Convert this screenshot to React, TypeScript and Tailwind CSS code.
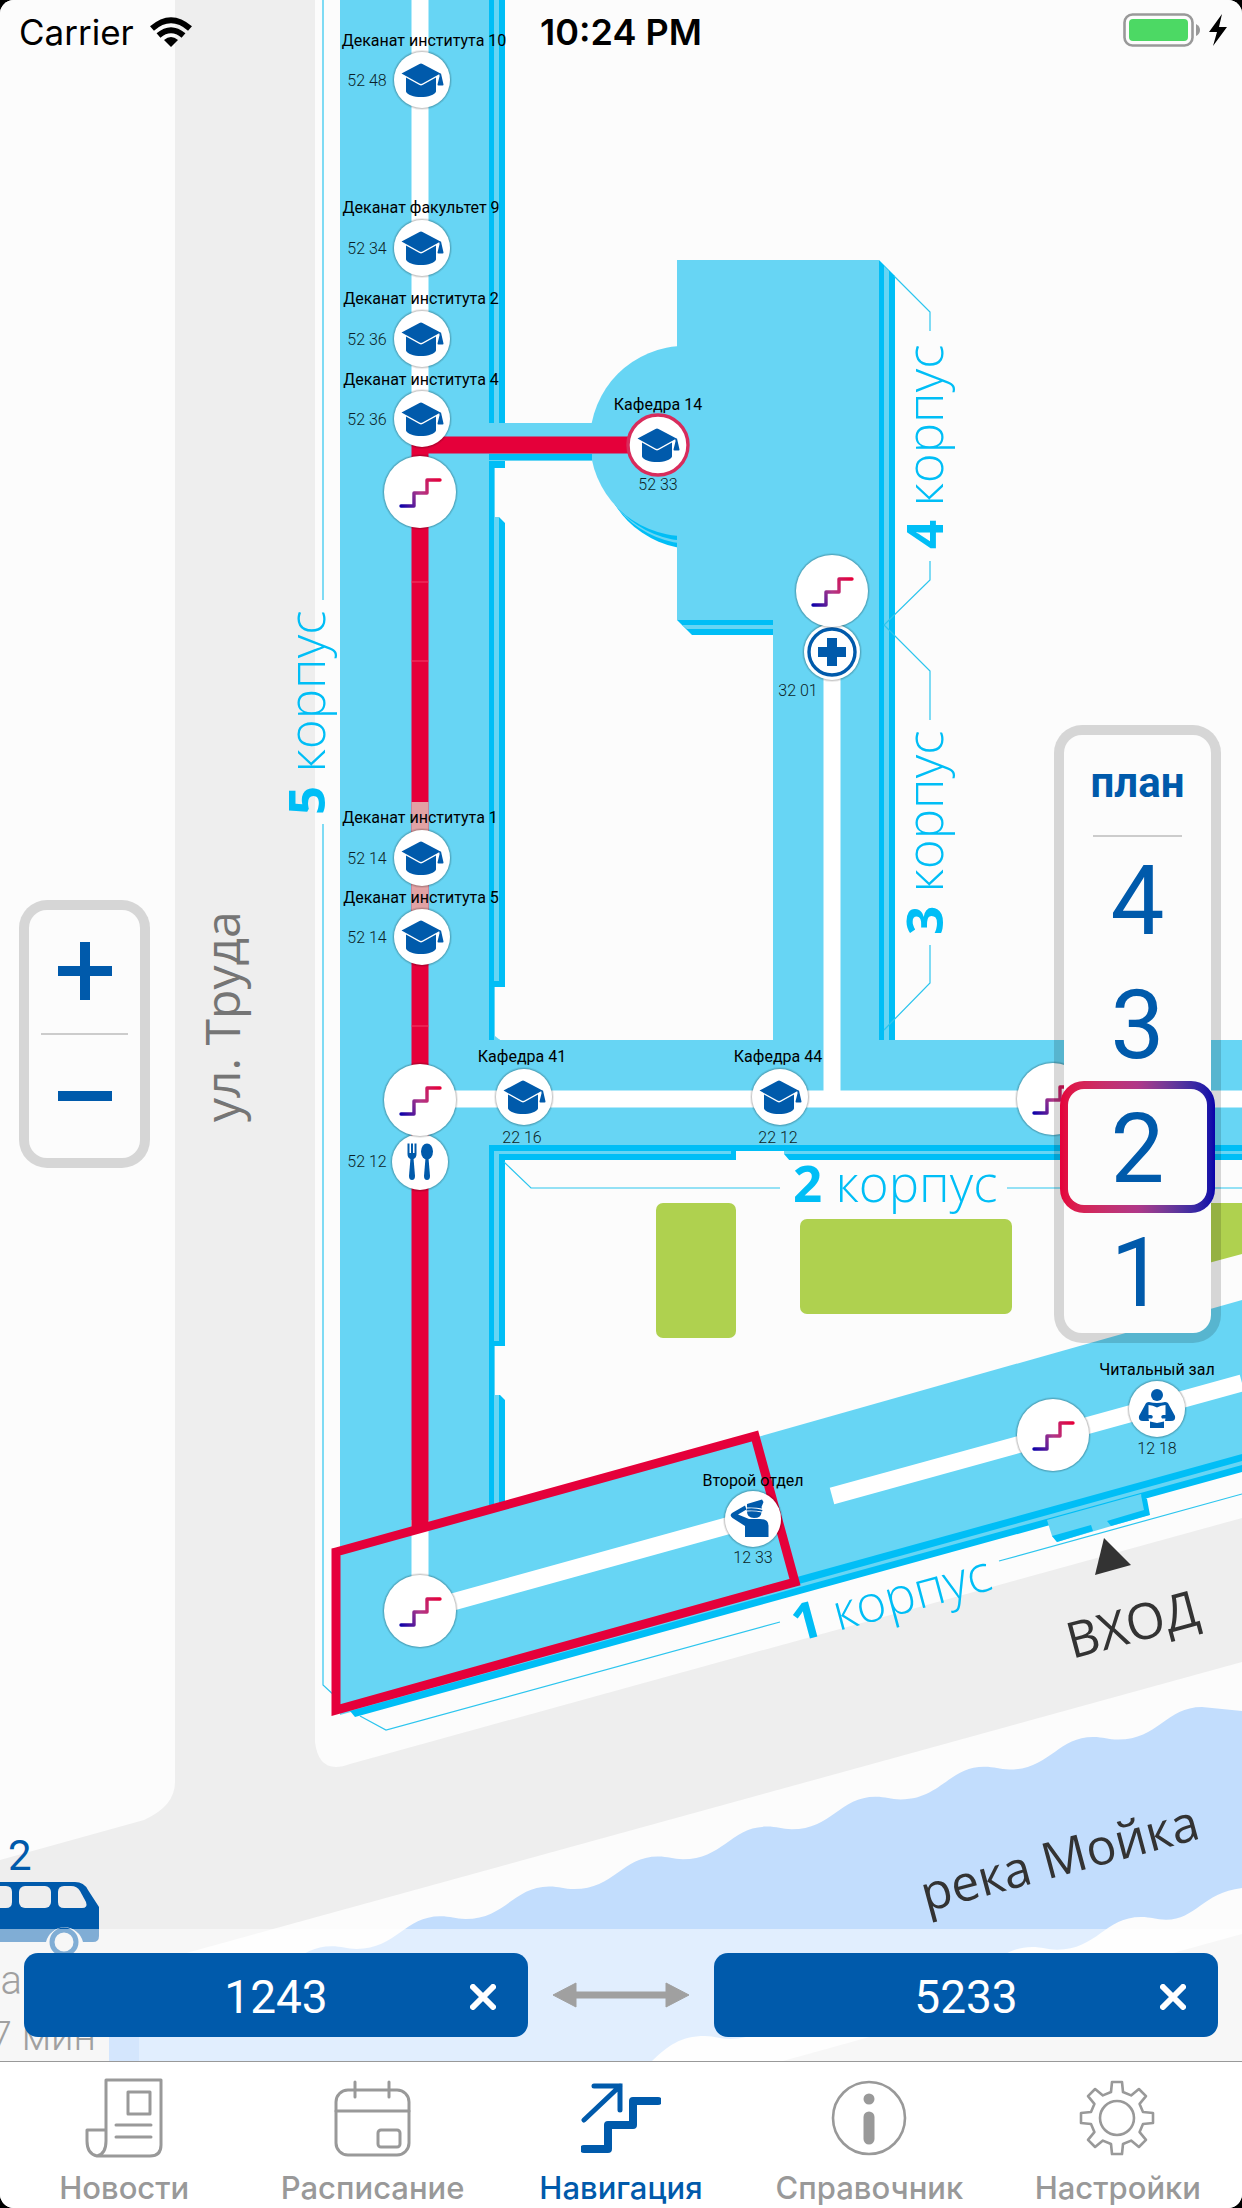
import React, { useState } from "react";

type Point = { x: number; y: number };

const CYAN = "#67d5f4";
const DEEP = "#00bef6";
const RED = "#e5003a";
const BLUE = "#005aab";
const PAPER = "#fcfcfc";

function Disc({ x, y, r, children }: Point & { r: number; children?: React.ReactNode }) {
  return (
    <g transform={`translate(${x} ${y})`}>
      <circle r={r + 2} fill="#000" opacity="0.08" />
      <circle r={r + 1} fill="#000" opacity="0.14" />
      <circle r={r} fill="#fff" />
      {children}
    </g>
  );
}

function Stairs({ x, y }: Point) {
  return (
    <Disc x={x} y={y} r={36}>
      <path
        d="M-19 14H-6V1H7V-12H20"
        fill="none"
        stroke="url(#stairs)"
        strokeWidth="3.4"
        strokeLinecap="round"
        strokeLinejoin="round"
      />
    </Disc>
  );
}

function CapGlyph() {
  return (
    <g fill={BLUE}>
      <path d="M-20.5-6.5L-2.5-16Q-1-16.8 .5-16L18.5-6.5L.5 3.6Q-1 4.4-2.5 3.6Z" />
      <path d="M-16-2.6L-2.5 5Q-1 5.8 .5 5L14-2.6V11.5C13 15 6 17-1 17S-15 15-16 11.5Z" />
      <path d="M17-6.5h2L21.5 4.6Q21.6 5.6 20.6 5.6H16.4Q15.4 5.6 15.5 4.6L17.6-4Z" />
    </g>
  );
}

function Cap({ x, y, active }: Point & { active?: boolean }) {
  return (
    <Disc x={x} y={y} r={28}>
      {active && <circle r="30" fill="#fff" stroke="#d82c5c" strokeWidth="3.4" />}
      <CapGlyph />
    </Disc>
  );
}

function Name({ x, y, children }: Point & { children: string }) {
  return (
    <text x={x} y={y + 5} textAnchor="middle" className="fill-black font-[Roboto,sans-serif] text-[16px]">
      {children}
    </text>
  );
}

function Room({ x, y, children }: Point & { children: string }) {
  return (
    <text x={x} y={y + 6} textAnchor="middle" className="fill-[#0c1f27] font-[Roboto,sans-serif] text-[16px] font-light">
      {children}
    </text>
  );
}

function Block({ x, y, angle, n }: Point & { angle: number; n: string }) {
  return (
    <text
      transform={`translate(${x} ${y}) rotate(${angle})`}
      className="fill-[#00bef6] font-['Open_Sans',sans-serif] text-[51px]"
    >
      <tspan className="font-bold">{n}</tspan>
      <tspan className="font-[350]"> корпус</tspan>
    </text>
  );
}

const WAVE = "c10 0 15 2.7 25 2.7c40 0 48-32.6 83.8-32.6";

function CampusMap() {
  return (
    <svg
      viewBox="0 0 1242 2061"
      preserveAspectRatio="xMidYMid slice"
      className="absolute inset-0 h-full w-full"
      role="img"
      aria-label="План корпусов"
    >
      <defs>
        <linearGradient id="stairs" gradientUnits="userSpaceOnUse" x1="-20" y1="14" x2="20" y2="-12">
          <stop offset="0" stopColor="#0a00aa" />
          <stop offset="0.5" stopColor="#b03788" />
          <stop offset="1" stopColor={RED} />
        </linearGradient>
        <clipPath id="apse">
          <rect x="560" y="330" width="117" height="240" />
        </clipPath>
      </defs>

      {/* streets */}
      <rect width="1242" height="2061" fill={PAPER} />
      <path d="M175 0H315V1742Q318 1767 336 1767Q342 1767 350 1764L1242 1518V1662L190 1952L110 1974V2061H0V1860L144 1820Q175 1806 175 1782Z" fill="#eeeeee" />
      <path d="M1242 1934L783 2061H1242Z" fill="#eeeeee" />

      {/* river */}
      <path
        d={`M109 2061V2006H114${WAVE}${WAVE}${WAVE}${WAVE}${WAVE}${WAVE}${WAVE}${WAVE}${WAVE}${WAVE}L1242 1711V1888C1202 1893 1196 1919.7 1166 1919.7C1156 1919.7 1151 1917 1141 1917C1105 1917 1097 1949.7 1057 1949.7C1047 1949.7 1042 1947 1032 1947C996 1947 988 1979.5 948 1979.5C938 1979.5 933 1977 923 1977C887 1977 879 2009 839 2009C829 2009 824 2006 814 2006C778 2006 770 2039 730 2039C720 2039 715 2036 705 2036C680 2036 668 2046 652 2061Z`}
        fill="#c2ddfd"
      />
      <rect x="109" y="2030" width="30" height="31" fill="#a9cdfb" />

      {/* lawns */}
      <rect x="656" y="1203" width="80" height="135" rx="7" fill="#afd14f" />
      <rect x="800" y="1219" width="212" height="95" rx="7" fill="#afd14f" />
      <path d="M1190 1203H1242V1254L1190 1268Z" fill="#afd14f" />

      {/* building 4 */}
      <path d="M879 260L895 276V1040H879Z" fill={DEEP} />
      <path d="M884 266L889 271V1040H884Z" fill={CYAN} />
      <g clipPath="url(#apse)">
        <ellipse cx="695" cy="453" rx="95" ry="96" fill={DEEP} />
        <circle cx="692" cy="449" r="95" fill={CYAN} />
        <circle cx="690" cy="446" r="95" fill={DEEP} />
        <circle cx="685" cy="441" r="95" fill={CYAN} />
      </g>
      <path d="M677 620H773V635H692L677 620Z" fill={DEEP} />
      <path d="M682 625H773V629H687Z" fill={CYAN} />
      <path d="M677 260H879V1045H773V620H677Z" fill={CYAN} />

      {/* building 5 */}
      <path d="M489 0H505V1505H489Z" fill={DEEP} />
      <path d="M494 0H499V1510H494Z" fill={CYAN} />
      <path d="M495 461H499V468H505V523L499 517H495Z" fill={PAPER} />
      <path d="M494 461H505V468H494Z" fill={DEEP} />
      <path d="M494 981H500V987H494Z" fill={DEEP} />
      <path d="M495 987H506V1040H500L495 1036Z" fill={PAPER} />
      <path d="M489 423H592V461H489Z" fill={CYAN} />
      <path d="M489 454H592V460H489Z" fill={DEEP} />
      <rect x="340" width="149" height="1560" fill={CYAN} />

      {/* building 2 */}
      <rect x="489" y="1145" width="753" height="15" fill={DEEP} />
      <rect x="495" y="1151" width="747" height="3" fill={CYAN} />
      <path d="M736 1151H784V1154L790 1161H736Z" fill={PAPER} />
      <rect x="731" y="1151" width="5" height="9" fill={DEEP} />
      <rect x="494" y="1151" width="5" height="190" fill={CYAN} />
      <rect x="494" y="1341" width="6" height="5" fill={DEEP} />
      <path d="M495 1346H506V1401L500 1395H495Z" fill={PAPER} />
      <rect x="400" y="1040" width="842" height="105" fill={CYAN} />

      {/* building 1 */}
      <path d="M340 1555L1242 1300V1466L340 1715Z" fill={CYAN} />
      <path d="M797 1577L1242 1454V1461L799 1584Z" fill={DEEP} />
      <path d="M350 1711L1242 1465V1472L355 1717Z" fill={DEEP} />
      <path d="M1047 1520L1141 1494L1149 1515L1057 1542L1052 1536Z" fill={CYAN} />
      <path d="M1052 1536L1091 1525L1093 1531L1057 1542Z" fill={DEEP} />
      <path d="M1107 1521L1144 1510L1141 1495L1147 1499L1150 1515L1111 1526Z" fill={DEEP} />

      {/* building outlines */}
      <g fill="none" stroke="#2cc5ee" strokeWidth="1.200">
        <path d="M323 0V600M323 824V1685L336 1697" />
        <path d="M360 1716L386 1730L780 1622M999 1561L1242 1494" />
        <path d="M504 1162L531 1188H780M1007 1188H1242" />
        <path d="M894 276L930 312V331M930 561V580L884 625L930 671V720M930 945V983L884 1030" />
      </g>

      {/* corridors */}
      <g fill="none" stroke="#fff" strokeWidth="17">
        <path d="M420 0V440M420 1520V1611L752 1519" />
        <path d="M420 1099H1242M832 650V1099" />
        <path d="M832 1496L1242 1383" />
      </g>

      {/* route */}
      <g fill="none" stroke={RED}>
        <path d="M420 1530V445H658" strokeWidth="17" />
        <path d="M420 802V960" stroke="#e2a2a4" strokeWidth="17" />
        <path d="M411 582H429M411 661H429M411 1026H429" stroke="#f0406a" strokeWidth="1" />
        <path d="M336 1552L755 1436L795 1582L336 1710Z" strokeWidth="9" />
      </g>

      <Block x={325} y={815} angle={-90} n="5" />
      <Block x={943} y={549} angle={-90} n="4" />
      <Block x={943} y={935} angle={-90} n="3" />
      <Block x={793} y={1202} angle={0} n="2" />
      <Block x={797} y={1642} angle={-15} n="1" />

      <text transform="translate(240 1122) rotate(-90)" className="fill-[#757575] font-['Open_Sans',sans-serif] text-[48px]">
        ул. Труда
      </text>
      <text transform="translate(926 1912) rotate(-15)" className="fill-[#333] font-['Open_Sans',sans-serif] text-[50px]">
        река Мойка
      </text>
      <text transform="translate(1072 1659) rotate(-15)" className="fill-[#333] font-['Open_Sans',sans-serif] text-[50px]">
        ВХОД
      </text>
      <path d="M1104 1538L1131 1565L1095 1575Z" fill="#333" />

      {/* bus stop */}
      <text x="8" y="1870" className="fill-[#005aab] font-[Roboto,sans-serif] text-[42px]">2</text>
      <path d="M0 1882H75Q84 1882 88 1890L99 1907V1936Q99 1942 93 1942H83A19 19 0 0 0 46 1942H0Z" fill={BLUE} />
      <g fill="#eeeeee">
        <path d="M0 1886H6Q12 1886 12 1892V1902Q12 1908 6 1908H0Z" />
        <rect x="19" y="1886" width="32" height="22" rx="6" />
        <path d="M64 1886H71Q77 1886 80 1891L86 1902Q88 1908 82 1908H64Q58 1908 58 1902V1892Q58 1886 64 1886Z" />
      </g>
      <circle cx="64" cy="1942" r="12" fill="#eeeeee" stroke={BLUE} strokeWidth="5" />
      <g className="fill-[#404040] font-[Roboto,sans-serif] text-[40px] font-light">
        <text x="22" y="1994" textAnchor="end">а</text>
        <text x="96" y="2050" textAnchor="end">7 мин</text>
      </g>

      {/* places */}
      <Name x={424} y={41}>Деканат института 10</Name>
      <Name x={421} y={208}>Деканат факультет 9</Name>
      <Name x={421} y={299}>Деканат института 2</Name>
      <Name x={421} y={380}>Деканат института 4</Name>
      <Name x={420} y={818}>Деканат института 1</Name>
      <Name x={421} y={898}>Деканат института 5</Name>
      <Room x={367} y={80}>52 48</Room>
      <Room x={367} y={248}>52 34</Room>
      <Room x={367} y={339}>52 36</Room>
      <Room x={367} y={419}>52 36</Room>
      <Room x={367} y={858}>52 14</Room>
      <Room x={367} y={937}>52 14</Room>
      <Room x={367} y={1161}>52 12</Room>
      <Cap x={422} y={80} />
      <Cap x={422} y={248} />
      <Cap x={422} y={339} />
      <Cap x={422} y={419} />
      <Cap x={422} y={858} />
      <Cap x={422} y={937} />

      <Name x={658} y={405}>Кафедра 14</Name>
      <Cap x={658} y={445} active />
      <Room x={658} y={484}>52 33</Room>

      <Name x={522} y={1057}>Кафедра 41</Name>
      <Cap x={524} y={1097} />
      <Room x={522} y={1137}>22 16</Room>
      <Name x={778} y={1057}>Кафедра 44</Name>
      <Cap x={780} y={1097} />
      <Room x={778} y={1137}>22 12</Room>

      <Disc x={832} y={652} r={28}>
        <circle r="23" fill="none" stroke={BLUE} strokeWidth="3.400" />
        <path d="M-5-14H5V-5H14V5H5V14H-5V5H-14V-5H-5Z" fill={BLUE} />
      </Disc>
      <Room x={798} y={690}>32 01</Room>

      <Disc x={420} y={1162} r={28}>
        <g fill={BLUE}>
          <path d="M-12.500-18.500H-10.500V-9H-9V-18.500H-7V-9H-5.500V-18.500H-3.500V-8Q-3.500-4-6.500-3H-9.500Q-12.500-4-12.500-8Z" />
          <path d="M-9.500-4H-6.500L-5 14Q-5 18-8 18T-11 14Z" />
          <ellipse cx="7" cy="-10.500" rx="6" ry="8" />
          <path d="M5.500-4H8.500L10 14Q10 18 7 18T4 14Z" />
        </g>
      </Disc>

      <Stairs x={420} y={492} />
      <Stairs x={832} y={591} />
      <Stairs x={420} y={1100} />
      <Stairs x={1053} y={1099} />
      <Stairs x={420} y={1611} />
      <Stairs x={1053} y={1435} />

      <Disc x={753} y={1519} r={28}>
        <g fill={BLUE}>
          <path d="M-6-15L9-19.500L10.500-17L8.500-12L9-10.500Q2-12-6-11.500Z" />
          <path d="M-6-10.500Q2-11.500 9.500-9L9-7.500Q2-9-6.500-8.500Z" />
          <path d="M-6-7.500Q1-8.500 8.500-6.500Q8-1 1-1T-6-7.500Z" />
          <path d="M-8-13.500L-21-6Q-24-3.500-20.500-1L-8 7V18H15.500V7Q15.500 0 7 0H-4L-15-4.500L-6.500-9.500Z" />
        </g>
      </Disc>
      <Name x={753} y={1481}>Второй отдел</Name>
      <Room x={753} y={1557}>12 33</Room>

      <Disc x={1157} y={1409} r={28}>
        <g fill={BLUE}>
          <circle cy="-14" r="6" />
          <path d="M-8-7Q0-5 8-7Q11-7 12-4L18 7Q19 12 14 12H-14Q-19 12-18 7L-12-4Q-11-7-8-7Z" />
          <path d="M-8.500-4Q-4-4 0-1.500Q4-4 8.500-4V12L0 14L-8.500 12Z" fill="#fff" />
          <path d="M-12 6H-6Q-3 7-5 9.500H-9L-8 12H-14Z" />
          <path d="M12 6H6Q3 7 5 9.500H9L8 12H14Z" />
          <path d="M-7 12.500L0 14L7 12.500V19H-7Z" />
        </g>
      </Disc>
      <Name x={1157} y={1370}>Читальный зал</Name>
      <Room x={1157} y={1448}>12 18</Room>
    </svg>
  );
}

function StatusBar() {
  return (
    <header className="relative grid h-16 grid-cols-3 items-center px-[19px] font-[Inter,sans-serif] text-black">
      <div className="flex items-center gap-4 text-[35px] leading-none">
        <span>Carrier</span>
        <svg viewBox="0 0 42 30" className="h-[30px] w-[42px]" aria-label="Wi-Fi">
          <g fill="none" stroke="#000" strokeWidth="6">
            <path d="M2 11.500Q21-5 40 11.500" />
            <path d="M8.500 18.500Q21 8 33.500 18.500" />
          </g>
          <path d="M14 23Q21 17 28 23L21 30Z" />
        </svg>
      </div>
      <time className="text-center text-[36px] leading-none font-semibold">10:24 PM</time>
      <div className="-mr-1 flex items-center justify-end gap-2 pb-1">
        <svg viewBox="0 0 78 34" className="h-[34px] w-[78px]" aria-label="Батарея">
          <rect x="1.500" y="1.500" width="68" height="31" rx="8" fill="none" stroke="#999" strokeWidth="2.600" />
          <rect x="6" y="6" width="59" height="22" rx="4" fill="#4cd964" />
          <path d="M73 11Q77 13 77 17T73 23Z" fill="#999" />
        </svg>
        <svg viewBox="0 0 18 32" className="h-8 w-[18px]" aria-label="Зарядка">
          <path d="M13 0L0 18H8L4 32L18 13H10Z" />
        </svg>
      </div>
    </header>
  );
}

const FLOORS = ["4", "3", "2", "1"];

function RouteField({ label, value }: { label: string; value: string }) {
  const [text, setText] = useState(value);
  return (
    <div className="relative h-21 min-w-0 flex-1">
      <input
        aria-label={label}
        value={text}
        onChange={(e) => setText(e.target.value)}
        className="h-full w-full rounded-[14px] bg-[#005aab] px-16 pt-1 text-center font-[Roboto,sans-serif] text-[46px] text-white outline-none"
      />
      <button
        type="button"
        aria-label={`Очистить: ${label}`}
        onClick={() => setText("")}
        className="absolute inset-y-0 right-0 flex w-[90px] items-center justify-center pt-1"
      >
        <svg viewBox="0 0 26 26" className="h-[26px] w-[26px]">
          <path d="M3 3L23 23M23 3L3 23" stroke="#fff" strokeWidth="6" strokeLinecap="round" />
        </svg>
      </button>
    </div>
  );
}

function gearPath() {
  const parts: string[] = [];
  for (let i = 0; i < 8; i++) {
    const t = (i * Math.PI) / 4;
    const at = (dx: number, dy: number) =>
      `${(38 + dx * Math.cos(t) - dy * Math.sin(t)).toFixed(1)} ${(38 + dx * Math.sin(t) + dy * Math.cos(t)).toFixed(1)}`;
    parts.push(`${i ? "L" : "M"}${at(-6, -26)}L${at(-5, -36)}L${at(5, -36)}L${at(6, -26)}`);
  }
  return parts.join("") + "Z";
}

const TABS = [
  {
    title: "Новости",
    icon: (
      <g>
        <path d="M20 1H75V66Q75 77 64 77H11Q1 75 1 62V51H20M20 1V62Q20 75 11 77" />
        <rect x="42" y="13" width="22" height="22" />
        <path d="M30 46H65M30 58H65" />
      </g>
    ),
  },
  {
    title: "Расписание",
    icon: (
      <g>
        <rect x="1" y="11" width="73" height="65" rx="12" />
        <path d="M1 32H74M20 3V18M54 3V18" />
        <rect x="43" y="51" width="22" height="17" rx="3" />
      </g>
    ),
  },
  {
    title: "Навигация",
    icon: (
      <g>
        <path d="M1 70H25V46H50V22H75" strokeWidth="8" />
        <path d="M1 41L37 7M11 7H37V31" strokeWidth="5" strokeLinejoin="miter" />
      </g>
    ),
  },
  {
    title: "Справочник",
    icon: (
      <g>
        <circle cx="38" cy="39" r="36" strokeWidth="2.600" />
        <circle cx="38" cy="20" r="5.500" fill="currentColor" stroke="none" />
        <path d="M38 38V60" strokeWidth="11" />
      </g>
    ),
  },
  {
    title: "Настройки",
    icon: (
      <g transform="translate(-1 1)" strokeWidth="2.600">
        <path d={gearPath()} />
        <circle cx="38" cy="38" r="17" />
      </g>
    ),
  },
];

export default function App() {
  const [floor, setFloor] = useState("2");
  const [tab, setTab] = useState("Навигация");
  return (
    <div className="min-h-screen bg-black">
      <div className="flex min-h-screen flex-col overflow-hidden rounded-[14px] bg-white">
        <main className="relative flex flex-1 flex-col overflow-hidden">
          <CampusMap />
          <StatusBar />

          <div className="relative flex flex-1 items-center justify-between pt-[74px] pr-[21px] pl-[19px]">
            <div className="flex w-[131px] flex-col rounded-[28px] border-10 border-black/15 bg-[#fcfcfc] bg-clip-padding">
              <button type="button" aria-label="Приблизить" className="flex h-[123px] items-center justify-center">
                <svg viewBox="0 0 56 60" className="h-[60px] w-14">
                  <path d="M28 1V59M1 30H55" stroke={BLUE} strokeWidth="10" />
                </svg>
              </button>
              <hr className="mx-3 border-t-2 border-[#ccc]" />
              <button type="button" aria-label="Отдалить" className="flex h-[123px] items-center justify-center">
                <svg viewBox="0 0 56 10" className="h-[10px] w-14">
                  <path d="M1 5H55" stroke={BLUE} strokeWidth="10" />
                </svg>
              </button>
            </div>

            <div className="flex w-[167px] flex-col rounded-[28px] border-10 border-black/15 bg-[#fcfcfc] bg-clip-padding font-[Roboto,sans-serif] text-[#005aab]">
              <h2 className="flex h-[100px] items-center justify-center pb-1 text-[42px] font-bold">план</h2>
              <hr className="mx-[29px] border-t-2 border-[#ccc]" />
              {FLOORS.map((f) => (
                <button
                  key={f}
                  type="button"
                  aria-pressed={f === floor}
                  onClick={() => setFloor(f)}
                  className="relative flex h-[124px] items-center justify-center pt-1 text-[96px] leading-none"
                >
                  {f === floor && (
                    <span className="absolute -inset-1 rounded-[24px] bg-linear-to-r from-[#e5003a] via-[#b03788] to-[#0a00aa] p-2">
                      <span className="block h-full w-full rounded-[16px] bg-[#fcfcfc]" />
                    </span>
                  )}
                  <span className="relative">{f}</span>
                </button>
              ))}
            </div>
          </div>

          <form
            className="relative flex items-center justify-between gap-6 bg-white/50 px-6 py-6"
            onSubmit={(e) => e.preventDefault()}
          >
            <RouteField label="Откуда" value="1243" />
            <button type="button" aria-label="Поменять местами">
              <svg viewBox="0 0 138 26" className="h-[26px] w-[138px]">
                <path d="M20 13H118" stroke="#a0a0a0" strokeWidth="7" />
                <path d="M1 13L24 1V25ZM137 13L114 1V25Z" fill="#a0a0a0" stroke="#a0a0a0" strokeLinejoin="round" />
              </svg>
            </button>
            <RouteField label="Куда" value="5233" />
          </form>
        </main>

        <nav className="grid h-[147px] grid-cols-5 border-t border-[#999] bg-white font-[Inter,sans-serif]">
          {TABS.map((t) => (
            <button
              key={t.title}
              type="button"
              aria-current={t.title === tab ? "page" : undefined}
              onClick={() => setTab(t.title)}
              className={
                t.title === tab
                  ? "flex flex-col items-center gap-3 pt-4 text-[#005aab]"
                  : "flex flex-col items-center gap-3 pt-4 text-[#999]"
              }
            >
              <svg
                viewBox="-2 -1 80 80"
                className="h-20 w-20"
                fill="none"
                stroke="currentColor"
                strokeWidth="3"
                strokeLinecap="round"
                strokeLinejoin="round"
              >
                {t.icon}
              </svg>
              <span className="text-[31px] leading-9 font-medium">{t.title}</span>
            </button>
          ))}
        </nav>
      </div>
    </div>
  );
}
